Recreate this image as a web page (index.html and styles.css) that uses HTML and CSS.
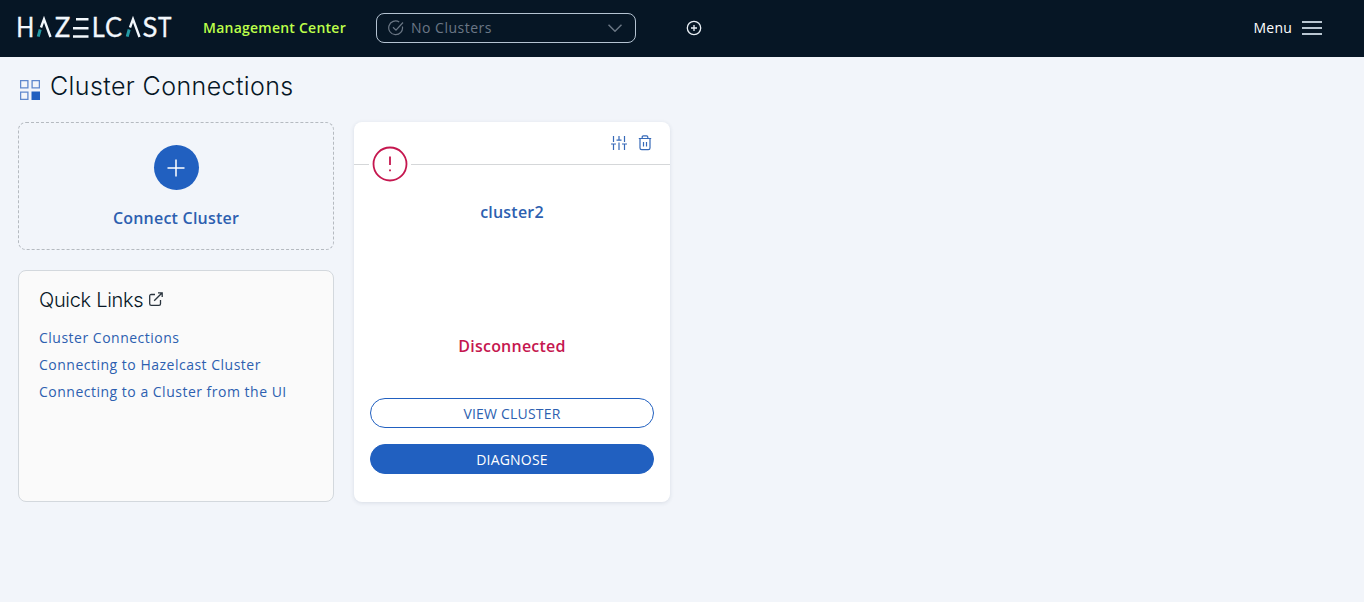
FILE: index.html
```html
<!DOCTYPE html>
<html lang="en">
<head>
<meta charset="utf-8">
<title>Management Center</title>
<link rel="stylesheet" href="styles.css">
</head>
<body>
<header class="topbar">
  <svg class="logo" width="160" height="44" viewBox="16 6 160 44" role="img" aria-label="Hazelcast">
    <g class="logo-text">
      <text x="16.2" y="37.3" textLength="18" lengthAdjust="spacingAndGlyphs">H</text>
      <text x="54.8" y="37.3" textLength="15.500" lengthAdjust="spacingAndGlyphs">Z</text>
      <text x="91.700" y="37.3" textLength="13" lengthAdjust="spacingAndGlyphs">L</text>
      <text x="105" y="37.3" textLength="17" lengthAdjust="spacingAndGlyphs">C</text>
      <text x="142.500" y="37.3" textLength="15" lengthAdjust="spacingAndGlyphs">S</text>
      <text x="158" y="37.3" textLength="13.500" lengthAdjust="spacingAndGlyphs">T</text>
    </g>
    <g class="logo-marks">
      <path d="M41 27.500 44 19.2 50.500 37"/>
      <path d="M76 19.2H88.500M73 28.200H88.500M73 36.500H88.500"/>
      <path d="M130 27.500 133 19.2 139.500 37"/>
      <path class="logo-accent" d="M40.200 29.500 38.200 36.700M129.200 29.500 127.200 36.700"/>
    </g>
  </svg>
  <span class="product">Management Center</span>
  <div class="select">
    <svg width="16" height="16" viewBox="0 0 16 16"><path d="M14.400 6.500a6.900 6.900 0 1 1-3.200-4.600M5 7.300l3 2.900 7-7.700"/></svg>
    <span class="select-label">No Clusters</span>
    <svg width="14" height="8" viewBox="0 0 14 8"><path d="M.5.700 7 7.200 13.500.700"/></svg>
  </div>
  <svg class="add" width="16" height="16" viewBox="0 0 16 16"><circle cx="8" cy="8" r="6.700"/><path d="M8 5v6M5 8h6"/></svg>
  <div class="menu"><span>Menu</span><i class="bars"></i></div>
</header>
<main class="page">
  <h1 class="title">
    <svg width="20" height="20" viewBox="0 0 20 20"><path d="M.6.600h7.300v7.300H.6zM12.100.600h7.300v7.300h-7.300zM.6 12.100h7.300v7.300H.6z"/><path class="filled" d="M11.500 11.500H20V20h-8.500z"/></svg>
    <span>Cluster Connections</span>
  </h1>
  <div class="grid">
    <div class="side">
      <a class="connect">
        <span class="connect-icon"><svg width="18" height="18" viewBox="0 0 18 18"><path d="M9 .5v17M.5 9h17"/></svg></span>
        <span>Connect Cluster</span>
      </a>
      <section class="links">
        <h2 class="links-title"><span>Quick Links</span><svg width="14" height="14" viewBox="0 0 14 14"><path d="M6 2.500H2.300Q.7 2.500.7 4v7.700q0 1.600 1.600 1.600H10q1.500 0 1.500-1.600V8M5.200 8.700 13.200.800M9 .800h4.200V5"/></svg></h2>
        <a>Cluster Connections</a>
        <a>Connecting to Hazelcast Cluster</a>
        <a>Connecting to a Cluster from the UI</a>
      </section>
    </div>
    <section class="card">
      <div class="card-head">
        <svg width="16" height="16" viewBox="0 0 16 16"><path d="M2.500 1v6M0 9h5M2.500 9v6M8 1v4M5.500 5.200h5M8 7.500V15M13.500 1v6M11 9h5M13.500 9v6"/></svg>
        <svg width="14" height="16" viewBox="0 0 14 16"><path d="M.8 3.500h12.400M4.200 3.300V2.100Q4.200.9 5.400.9h3.200q1.200 0 1.200 1.200v1.200M2 3.500V13q0 1.700 1.700 1.700h6.600Q12 14.700 12 13V3.500M5.500 7v4.500M8.500 7v4.500"/></svg>
        <span class="alert"><svg width="36" height="36" viewBox="0 0 36 36"><circle cx="18" cy="18" r="16.500"/><path d="M18 10.500v8.500M18 23.500v1.700"/></svg></span>
      </div>
      <div class="card-body">
        <div class="name">cluster2</div>
        <div class="status">Disconnected</div>
        <button class="btn">VIEW CLUSTER</button>
        <button class="btn btn-primary">DIAGNOSE</button>
      </div>
    </section>
  </div>
</main>
</body>
</html>
```
FILE: styles.css
```css
* { box-sizing: border-box; }
body { margin: 0; height: 602px; overflow: hidden; background: #f2f5fa; color: #061625; font: 14px/20px "Open Sans", sans-serif; }
svg { display: block; fill: none; flex: none; }
.topbar { display: flex; align-items: center; height: 57px; padding: 0 42px 1px 16px; background: #061625; color: #fff; }
.logo-text { fill: #f2f7fc; stroke: #f2f7fc; stroke-width: .3; font: 400 26px Lato, sans-serif; }
.logo-marks { stroke: #f2f7fc; stroke-width: 2.400; }
.logo-accent { stroke: #259ba5; stroke-width: 3; }
.product { width: 173px; margin-left: 27px; color: #bdff4a; font-weight: 600; letter-spacing: .24px; white-space: nowrap; }
.select { display: flex; align-items: center; width: 260px; height: 30px; padding: 0 13px 0 11px; border: 1px solid #b4c3d2; border-radius: 8px; color: #6b7785; letter-spacing: .5px; }
.select svg { stroke: #6b7785; stroke-width: 1.200; }
.select svg:last-child { stroke-width: 1.500; }
.select-label { flex: 1; margin-left: 7px; }
.add { margin-left: 50px; stroke: #e8eef4; stroke-width: 1.300; }
.menu { display: flex; align-items: center; gap: 10px; margin-left: auto; font-weight: 500; letter-spacing: .2px; }
.bars { width: 20px; height: 14px; border: solid #b9c6d1; border-width: 2px 0; background: linear-gradient(#b9c6d1, #b9c6d1) center / 100% 2px no-repeat; }
.page { padding: 14px 18px; }
.title { display: flex; align-items: center; gap: 10px; height: 32px; margin: 0 0 19px 2px; font: 300 25px/32px Inter, sans-serif; letter-spacing: .4px; }
.title span { margin-top: -2px; }
.title svg { margin-top: 6px; stroke: #5f88cd; stroke-width: 1.300; }
.title .filled { fill: #2160c0; stroke: none; }
.grid { display: grid; grid-template-columns: 316px 316px; gap: 20px; height: 380px; }
.side { display: flex; flex-direction: column; gap: 20px; }
.connect { display: flex; flex-direction: column; align-items: center; gap: 16px; height: 128px; padding-top: 22px; border: 1px dashed #b5bac0; border-radius: 8px; color: #2d5fb0; font-size: 16px; line-height: 24px; font-weight: 600; letter-spacing: .22px; }
.connect-icon { display: grid; place-items: center; width: 45px; height: 45px; border-radius: 50%; background: #2160c0; }
.connect-icon svg { stroke: #fff; stroke-width: 1.500; }
.links { display: flex; flex: 1; flex-direction: column; padding: 18px 20px; border: 1px solid #d3d8dd; border-radius: 8px; background: #fafafa; }
.links-title { display: flex; align-items: center; gap: 6px; height: 24px; margin: 0 0 11px; font: 300 20px/24px Inter, sans-serif; letter-spacing: -.3px; }
.links-title span { margin-top: -2px; }
.links-title svg { margin-top: -5px; stroke: #29333d; stroke-width: 1.300; }
.links a { color: #2d5fb0; line-height: 27px; letter-spacing: .5px; }
.card { border-radius: 8px; background: #fff; box-shadow: 0 1px 4px rgba(30, 50, 80, .12); }
.card-head { position: relative; display: flex; align-items: center; justify-content: flex-end; gap: 11px; height: 43px; padding-right: 18px; border-bottom: 1px solid #d5d7d9; }
.card-head svg { stroke: #3669b8; stroke-width: 1.200; }
.alert { position: absolute; left: 15px; top: 24px; padding: 0 3px; background: #fff; }
.card-head .alert svg { stroke: #c5174f; stroke-width: 1.800; }
.card-body { display: flex; flex-direction: column; align-items: stretch; padding: 35px 16px 0; text-align: center; }
.name, .status { font-size: 16px; font-weight: 600; line-height: 24px; letter-spacing: .22px; }
.name { color: #2d5fb0; }
.status { margin: 110px 0 40px; color: #c5174f; }
.btn { height: 30px; margin: 0 0 16px; padding: 1px 0 0; border: 1px solid #2160c0; border-radius: 15px; background: #fff; color: #2d5fb0; font: 14px "Open Sans", sans-serif; letter-spacing: .2px; }
.btn-primary { background: #2160c0; color: #fff; }
```
